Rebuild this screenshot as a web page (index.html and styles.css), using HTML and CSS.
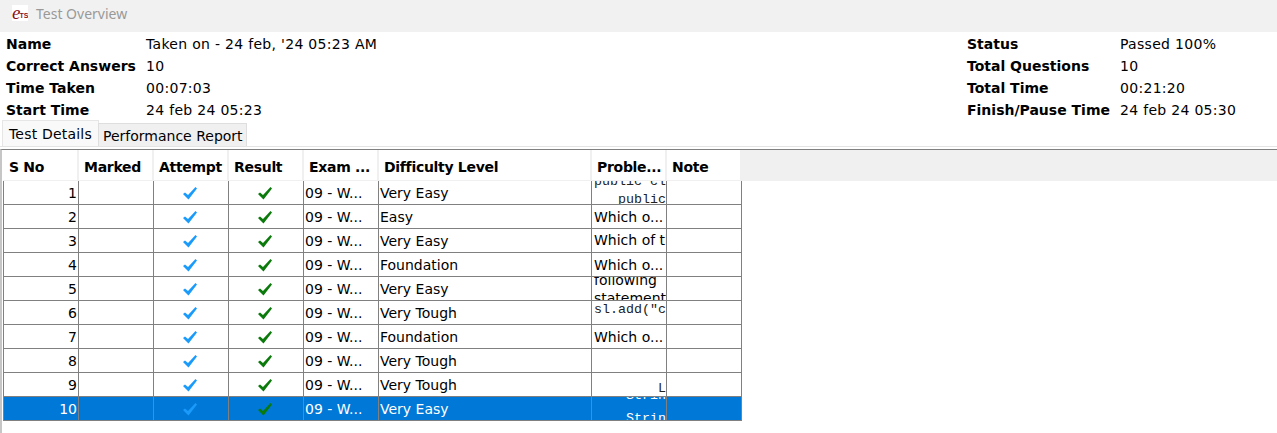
FILE: index.html
```html
<!DOCTYPE html>
<html lang="en">
  <head>
    <meta charset="UTF-8" />
    <title>Test Overview</title>
    <link rel="stylesheet" href="styles.css">
  </head>
  <body>
    <svg width="0" height="0" class="defs">
      <symbol id="tick" viewBox="0 0 14 13">
        <path d="M0 7 L2 5.5 L5 8 L12.5 0 L14 1.5 L5.5 12.5 Z" />
      </symbol>
    </svg>

    <div class="titlebar">
      <span class="logo"><i>e</i><b>TS</b></span>
      <span class="title">Test Overview</span>
    </div>

    <div class="info">
      <dl class="info-left">
        <dt>Name</dt><dd>Taken on - 24 feb, '24 05:23 AM</dd>
        <dt>Correct Answers</dt><dd>10</dd>
        <dt>Time Taken</dt><dd>00:07:03</dd>
        <dt>Start Time</dt><dd>24 feb 24 05:23</dd>
      </dl>
      <dl class="info-right">
        <dt>Status</dt><dd>Passed 100%</dd>
        <dt>Total Questions</dt><dd>10</dd>
        <dt>Total Time</dt><dd>00:21:20</dd>
        <dt>Finish/Pause Time</dt><dd>24 feb 24 05:30</dd>
      </dl>
    </div>

    <div class="tabs">
      <div class="tab active">Test Details</div>
      <div class="tab">Performance Report</div>
    </div>

    <div class="grid-wrap">
      <table class="grid">
        <colgroup>
          <col class="c-no" /><col class="c" /><col class="c" /><col class="c" /><col class="c" />
          <col class="c-level" /><col class="c" /><col class="c" /><col />
        </colgroup>
        <thead>
          <tr>
            <th>S No</th><th>Marked</th><th>Attempt</th><th>Result</th><th>Exam ...</th>
            <th>Difficulty Level</th><th>Proble...</th><th>Note</th><th class="filler"></th>
          </tr>
        </thead>
        <tbody id="rows"></tbody>
      </table>
    </div>

    <script>
      const mono = (t, cls) => '<div class="mono ' + (cls || "") + '">' + t + "</div>";
      const data = [
        ["Very Easy", mono("public cl", "first") + mono("public", "right")],
        ["Easy", "Which o..."],
        ["Very Easy", '<span class="cut">Which of the</span>'],
        ["Foundation", "Which o..."],
        ["Very Easy", '<div class="two">following</div><div class="two">statement</div>'],
        ["Very Tough", mono('sl.add("c', "up")],
        ["Foundation", "Which o..."],
        ["Very Tough", ""],
        ["Very Tough", mono("L", "right down")],
        ["Very Easy", mono("Strin", "right first") + mono("Strin", "right gap")],
      ];
      const tick = (c) => '<svg class="tick ' + c + '"><use href="#tick" /></svg>';
      document.getElementById("rows").innerHTML = data
        .map((r, i) => {
          const sel = i === data.length - 1 ? ' class="selected"' : "";
          return (
            "<tr" + sel + ">" +
            '<td class="num">' + (i + 1) + "</td>" +
            "<td></td>" +
            '<td class="mid">' + tick("blue") + "</td>" +
            '<td class="mid">' + tick("green") + "</td>" +
            "<td>09 - W...</td>" +
            "<td>" + r[0] + "</td>" +
            '<td class="problem"><div class="clip">' + r[1] + "</div></td>" +
            "<td></td>" +
            '<td class="filler"></td>' +
            "</tr>"
          );
        })
        .join("");
    </script>
  </body>
</html>
```

FILE: styles.css
```css
body {
  margin: 0;
  background-color: #fff;
  color: #000;
  font-family: "DejaVu Sans", sans-serif;
  font-size: 14px;
  overflow: hidden;
}
.defs {
  position: absolute;
}

/* title bar */
.titlebar {
  display: flex;
  align-items: flex-start;
  height: 32px;
  background-color: #f1f1f1;
  padding-left: 12px;
  box-sizing: border-box;
}
.logo {
  display: block;
  width: 16px;
  height: 16px;
  margin-top: 5px;
  background-color: #fff;
  color: #8c1020;
  overflow: hidden;
  white-space: nowrap;
  line-height: 15px;
}
.logo i {
  font-family: "Liberation Serif", serif;
  font-size: 19px;
  margin-right: -1px;
}
.logo b {
  font-family: "Liberation Sans", sans-serif;
  font-size: 7px;
  vertical-align: 1px;
}
.title {
  margin-left: 8px;
  margin-top: 4px;
  font-family: "Noto Sans", sans-serif;
  color: #999;
  line-height: 20px;
}

/* summary */
.info {
  display: flex;
  justify-content: space-between;
  padding-top: 1px;
}
.info dl {
  display: grid;
  grid-auto-rows: 22px;
  align-items: center;
  margin: 0;
}
.info-left {
  grid-template-columns: 140px auto;
  margin-left: 6px !important;
}
.info-right {
  grid-template-columns: 153px 157px;
}
.info dt {
  font-weight: bold;
}
.info dd {
  margin: 0;
  letter-spacing: 0.3px;
}

/* tabs */
.tabs {
  display: flex;
  align-items: flex-end;
  height: 25px;
  padding-left: 2px;
  border-bottom: 1px solid #e4e4e4;
}
.tab {
  height: 22px;
  line-height: 24px;
  padding: 0 1px 0 4px;
  width: 142px;
  background-color: #f0f0f0;
  border: 1px solid #dedede;
  border-bottom: none;
  margin-left: -1px;
}
.tab:first-child {
  margin-left: 0;
}
.tab.active {
  height: 25px;
  line-height: 26px;
  width: 88px;
  padding-left: 6px;
  letter-spacing: 0.2px;
  background-color: #f9f9f9;
  border-color: #e6e6e6;
}

/* table */
.grid-wrap {
  margin-top: 2px;
  border-top: 1px solid #808080;
  border-left: 2px solid #c6c6c6;
  padding: 0 0 14px 1px;
}
.grid {
  width: 100%;
  table-layout: fixed;
  border-collapse: separate;
  border-spacing: 0;
}
.c-no {
  width: 76px;
}
.c {
  width: 75px;
}
.c-level {
  width: 213px;
}
.grid th {
  height: 31px;
  padding: 3px 0 0 5px;
  box-sizing: border-box;
  text-align: left;
  letter-spacing: -0.3px;
  white-space: nowrap;
  overflow: hidden;
  background-color: #fff;
  border-right: 2px solid #f0f0f0;
  border-bottom: 1px solid #f0f0f0;
}
.grid th:first-child {
  padding-left: 6px;
}
.grid th.filler {
  background-color: #f0f0f0;
  border: none;
}
.grid td {
  height: 24px;
  padding: 0 0 0 1px;
  box-sizing: border-box;
  white-space: nowrap;
  overflow: hidden;
  border-right: 1px solid #808080;
  border-bottom: 1px solid #808080;
}
.grid td:first-child {
  border-left: 1px solid #808080;
}
.grid td.filler {
  border: none;
  background-color: #fff;
}
.grid td.num {
  text-align: right;
  padding: 0 1px 0 0;
}
.grid td.mid {
  text-align: center;
  padding: 0 2px 0 0;
}
.grid td.problem {
  padding: 0;
}
.clip {
  display: flex;
  flex-direction: column;
  justify-content: center;
  height: 23px;
  overflow: hidden;
  padding-left: 2px;
}
.two {
  line-height: 18px;
  flex: none;
}
.cut {
  display: block;
  overflow: hidden;
  margin-top: -2px;
}
.mono {
  flex: none;
  font-family: "Liberation Mono", monospace;
  font-size: 13.33px;
  line-height: 18px;
  color: #222;
}
.mono.right {
  text-align: right;
}
.mono.first {
  margin-top: -3px;
}
.mono.up {
  margin-top: -5px;
}
.mono.down {
  margin-top: 9px;
}
.mono.gap {
  margin-top: 5px;
}
.tick {
  display: inline-block;
  vertical-align: middle;
  width: 14px;
  height: 13px;
}
.tick.blue {
  fill: #1a9bfc;
}
.tick.green {
  fill: #0a7a0a;
}
tr.selected td {
  background-color: #0078d7;
  color: #fff;
}
tr.selected .mono {
  color: #fff;
}
tr.selected td.filler {
  background-color: #fff;
}
```
